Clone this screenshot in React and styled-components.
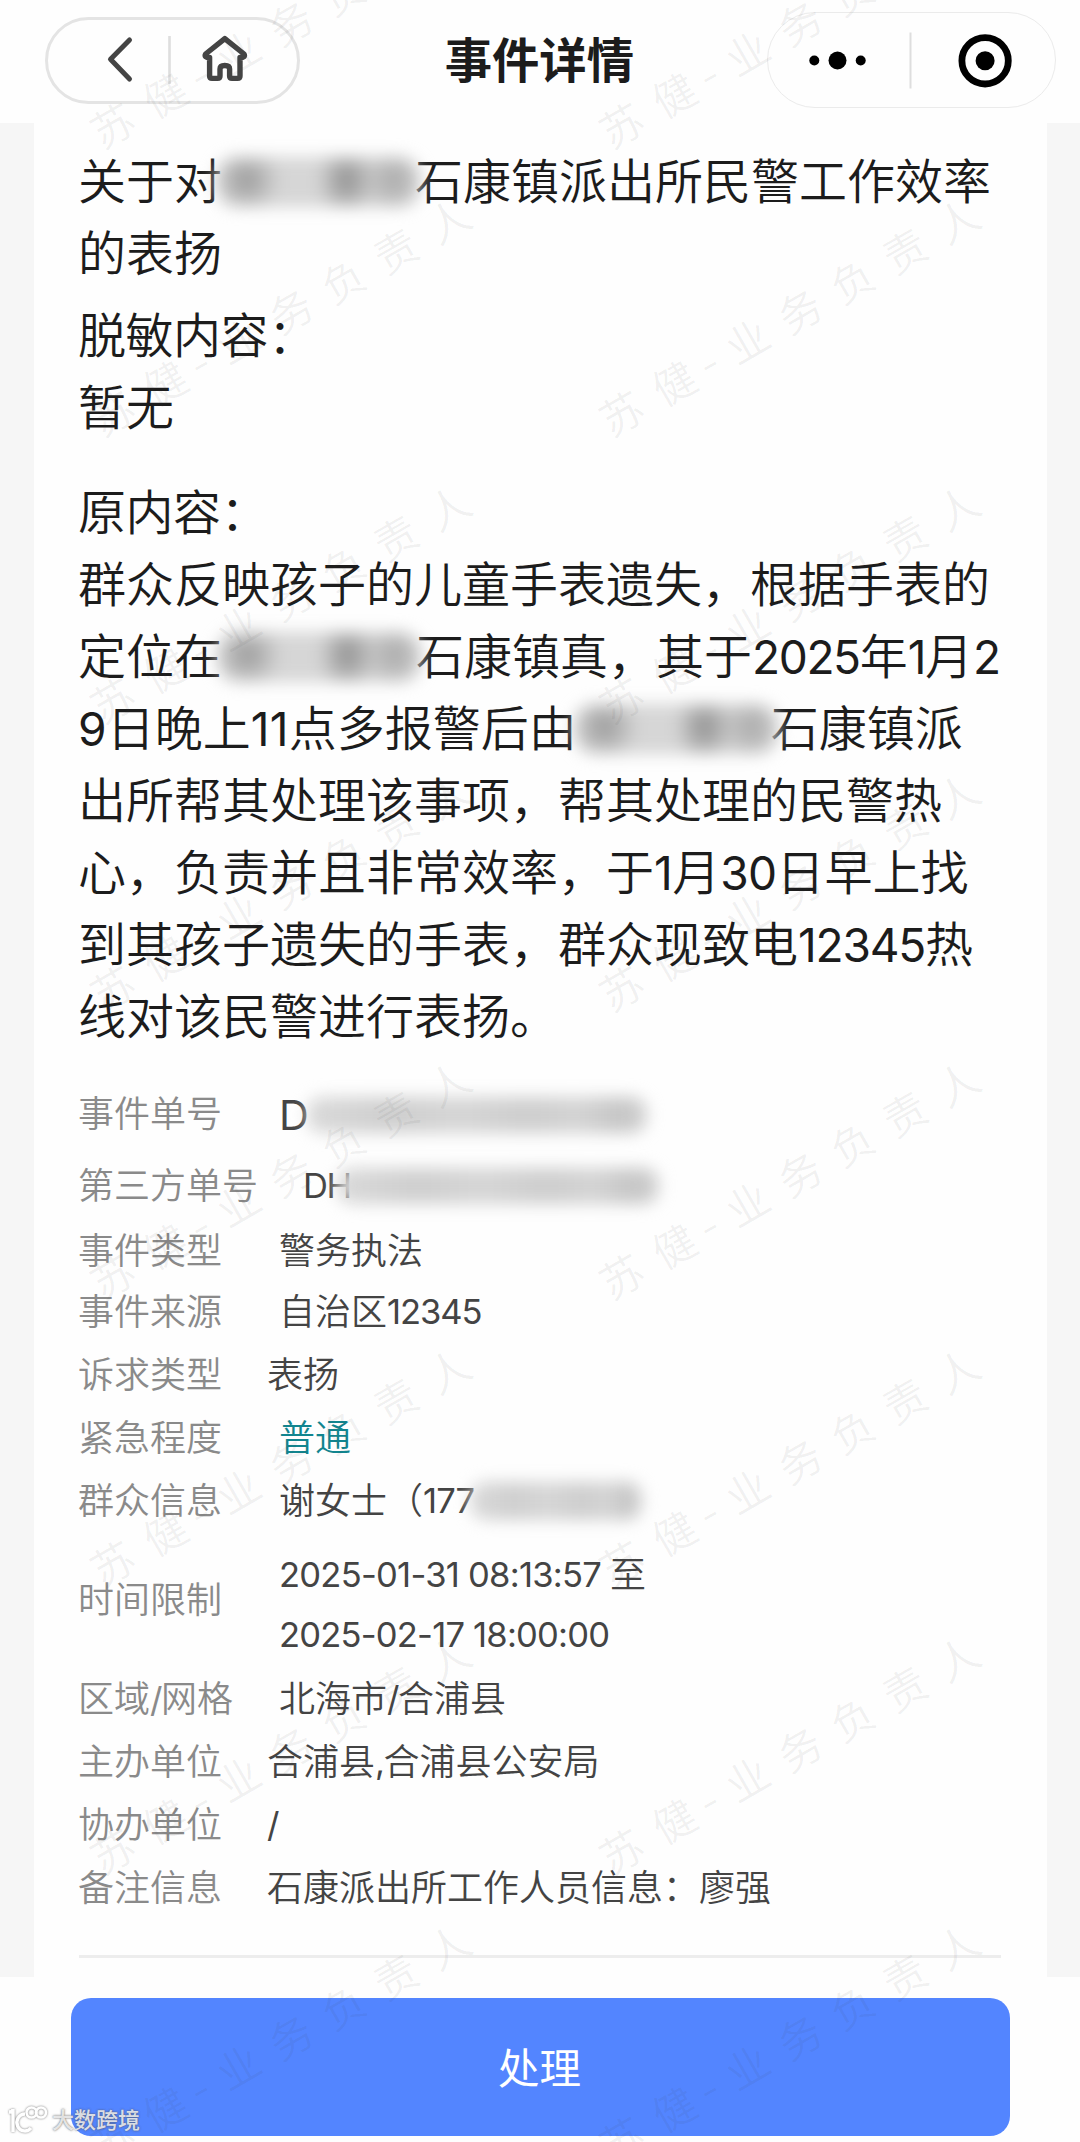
import React from "react";
import styled, { createGlobalStyle, css } from "styled-components";

const Global = createGlobalStyle`
  *, *::before, *::after { box-sizing: border-box; }
  html, body { margin: 0; padding: 0; background: #fefefe; }
  body { font-family: Inter, "Noto Sans CJK SC", sans-serif; color: #1c1c1c; }
`;

const Screen = styled.div`
  position: relative;
  width: 1080px;
  height: 2142px;
  overflow: hidden;
  background: #fefefe;
  display: flex;
  flex-direction: column;
`;

const Header = styled.header`
  height: 123px;
  flex: none;
  display: flex;
  justify-content: space-between;
  align-items: flex-start;
  padding: 12px 24px 0 45px;
`;

const Capsule = styled.div`
  display: flex;
  align-items: center;
  border-radius: 48px;
`;

const NavCapsule = styled(Capsule)`
  width: 255px;
  height: 87px;
  margin-top: 5px;
  border: 3px solid #e4e4e4;
`;

const MenuCapsule = styled(Capsule)`
  width: 289px;
  height: 96px;
  border: 1.5px solid #ebebeb;
`;

const Title = styled.h1`
  margin: 0 0 0 12.5px;
  height: 96px;
  line-height: 97px;
  font-size: 47.3px;
  font-weight: 700;
  width: 190px;
  white-space: nowrap;
`;

const Body = styled.main`
  flex: none;
  height: 1854px;
  margin: 0;
  padding: 0 33px 0 34px;
  background: #f6f6f6;
`;

const Card = styled.article`
  height: 100%;
  background: #fefefe;
  padding: 23px 46px 0 44px;
  display: flex;
  flex-direction: column;
`;

const Line = styled.p`
  margin: 0;
  height: 72px;
  line-height: 72px;
  font-size: 48px;
  font-weight: 350;
  white-space: nowrap;
  display: flex;
  letter-spacing: ${(p) => p.$ls || 0}px;
`;

const Gap = styled.div`
  flex: none;
  height: ${(p) => p.$h}px;
`;

const Latin = styled.span`
  font-family: Inter, sans-serif;
  font-size: 0.96em;
  font-weight: 370;
  letter-spacing: ${(p) => p.$ls || 0}px;
  white-space: pre;
`;

const Smudge = styled.span`
  display: block;
  flex: none;
  width: ${(p) => p.$w}px;
  height: ${(p) => p.$h}px;
  margin: 0 ${(p) => p.$mr || 0}px 0 ${(p) => p.$ml || 0}px;
  align-self: center;
  border-radius: ${(p) => p.$h / 2.4}px;
  filter: blur(8px);
  ${(p) =>
    p.$tone === "name"
      ? css`
          background:
            radial-gradient(ellipse 34px 34px at 15% 46%, #999, #99999900),
            radial-gradient(ellipse 30px 38px at 64% 46%, #8e8e8e, #8e8e8e00),
            radial-gradient(ellipse 32px 36px at 87% 46%, #a8a8a8, #a8a8a800),
            #d6d6d6;
        `
      : css`
          background: linear-gradient(90deg, #dadada, #cfcfcf 25%, #d6d6d6 45%, #cecece 65%, #d4d4d4 80%, #c6c6c6 92%, #d2d2d2);
        `}
`;

const Row = styled.div`
  flex: none;
  display: flex;
  align-items: center;
  height: ${(p) => p.$h || 63}px;
  font-size: 36px;
  font-weight: 350;
  white-space: nowrap;
`;

const Label = styled.div`
  flex: none;
  width: ${(p) => p.$w || 201}px;
  height: 60px;
  line-height: 60px;
  color: #8a8a8a;
  margin-top: ${(p) => p.$dy || 0}px;
`;

const Value = styled.div`
  display: flex;
  align-items: center;
  height: 60px;
  line-height: 60px;
  color: ${(p) => p.$color || "#444"};
  font-size: ${(p) => p.$size || 36}px;
  white-space: pre;
`;

const Stack = styled.div`
  display: flex;
  flex-direction: column;
  margin-top: 11px;
`;

const Rule = styled.hr`
  flex: none;
  width: 922px;
  height: 3px;
  margin: 36px 0 0 1px;
  border: 0;
  background: #ededed;
`;

const Footer = styled.footer`
  flex: 1;
  padding: 21px 70px 0 71px;
`;

const Action = styled.button`
  display: block;
  width: 939px;
  height: 138px;
  border: 0;
  border-radius: 20px;
  background: #5385ff;
  color: #fff;
  font: 400 41.5px/134px Inter, "Noto Sans CJK SC", sans-serif;
  padding: 4px 2px 0 0;
  text-align: center;
`;

const Marks = styled.div`
  position: absolute;
  left: 111px;
  top: 123px;
  display: grid;
  grid-template-columns: repeat(2, 509px);
  grid-auto-rows: 287.7px;
  pointer-events: none;
`;

const Mark = styled.div`
  width: 0;
  height: 0;
  display: flex;
  align-items: center;
  transform: rotate(-29.8deg);
  font-size: 42.5px;
  font-weight: 350;
  letter-spacing: 18px;
  color: rgba(60, 60, 60, 0.075);
  white-space: nowrap;
`;

const MarkText = styled.span`
  margin-left: -21px;
`;

const Dash = styled.span`
  display: inline-block;
  width: 33px;
  margin-left: -9px;
`;

const Brand = styled.div`
  position: absolute;
  left: 8px;
  top: 2105px;
  display: flex;
  align-items: flex-end;
  gap: 4px;
  color: rgba(255, 255, 255, 0.8);
  font-size: 22px;
  line-height: 29px;
  font-weight: 500;
  text-shadow: 0 0 2px rgba(90, 90, 90, 0.7), 0 0 2px rgba(90, 90, 90, 0.5);
`;

const BrandLogo = styled.svg`
  filter: drop-shadow(0 0 1px rgba(80, 80, 80, 0.75));
`;

function Mixed({ text, ls }) {
  return text
    .split(/([\x20-\x7e]+)/)
    .filter(Boolean)
    .map((part, i) =>
      /^[\x20-\x7e]/.test(part) ? (
        <Latin key={i} $ls={ls}>{part}</Latin>
      ) : (
        <span key={i}>{part}</span>
      )
    );
}

const Digits = ({ children, ls = -1.2 }) => <Mixed text={children} ls={ls} />;
const Small = ({ children, ls = -1.4 }) => <Mixed text={children} ls={ls} />;

export default function App() {
  return (
    <>
      <Global />
      <Screen>
        <Header>
          <NavCapsule>
            <svg width="249" height="81" viewBox="48 20 249 81" fill="none" stroke="#444" strokeLinecap="round" strokeLinejoin="round">
              <path d="M129.5 40 L110.5 59.3 L129.5 79" strokeWidth="5" />
              <path d="M169.5 36 V84" stroke="#dedede" strokeWidth="2.6" strokeLinecap="butt" />
              <path d="M224.8 38.6 L244 54 Q245.8 57.5 240 57.5 V76 Q240 78.4 237.6 78.4 H232 Q229.6 78.4 229.6 76 V69 Q229.6 65.5 224.8 65.5 Q220 65.5 220 69 V76 Q220 78.4 217.6 78.4 H212 Q209.6 78.4 209.6 76 V57.5 Q203.8 57.5 205.6 54 Z" strokeWidth="5.4" />
            </svg>
          </NavCapsule>
          <Title>事件详情</Title>
          <MenuCapsule>
            <svg width="286" height="93" viewBox="768.5 13.5 286 93">
              <circle cx="814.8" cy="60" r="5" />
              <circle cx="838" cy="60" r="9" />
              <circle cx="861.2" cy="60" r="5" />
              <path d="M911 32 V88" stroke="#dedede" strokeWidth="2" />
              <circle cx="985.6" cy="60.3" r="23.2" fill="none" stroke="#000" strokeWidth="6.8" />
              <circle cx="985.6" cy="60.3" r="9.5" />
            </svg>
          </MenuCapsule>
        </Header>

        <Body>
          <Card>
            <Line>
              关于对<Smudge $w={204} $h={50} $ml={-6} $mr={-5} $tone="name" />石康镇派出所民警工作效率
            </Line>
            <Line>的表扬</Line>
            <Gap $h={10} />
            <Line $ls={-0.5}>脱敏内容：</Line>
            <Line>暂无</Line>
            <Gap $h={33} />
            <Line $ls={-0.5}>原内容：</Line>
            <Line>群众反映孩子的儿童手表遗失，根据手表的</Line>
            <Line>
              定位在<Smudge $w={204} $h={50} $ml={-5} $mr={-5} $tone="name" />
              <Digits ls={-1.4}>石康镇真，其于2025年1月2</Digits>
            </Line>
            <Line>
              <Digits ls={0.2}>9日晚上11点多报警后由</Digits>
              <Smudge $w={204} $h={50} $ml={-3} $mr={-7} $tone="name" />石康镇派
            </Line>
            <Line>出所帮其处理该事项，帮其处理的民警热</Line>
            <Line><Digits ls={-0.6}>心，负责并且非常效率，于1月30日早上找</Digits></Line>
            <Line><Digits>到其孩子遗失的手表，群众现致电12345热</Digits></Line>
            <Line>线对该民警进行表扬。</Line>

            <Gap $h={26} />
            <Row $h={72}>
              <Label $dy={-3}>事件单号</Label>
              <Value $size={43}><Small>D</Small><Smudge $w={340} $h={36} /></Value>
            </Row>
            <Row $h={70}>
              <Label $w={225}>第三方单号</Label>
              <Value><Small>DH</Small><Smudge $w={322} $h={36} $ml={-14} /></Value>
            </Row>
            <Row $h={59}><Label>事件类型</Label><Value>警务执法</Value></Row>
            <Row><Label>事件来源</Label><Value><Small ls={-1.1}>自治区12345</Small></Value></Row>
            <Row><Label $w={189}>诉求类型</Label><Value>表扬</Value></Row>
            <Row><Label>紧急程度</Label><Value $color="#12858f">普通</Value></Row>
            <Row>
              <Label>群众信息</Label>
              <Value><Small ls={-0.9}>谢女士（177</Small><Smudge $w={172} $h={38} $ml={-4} /></Value>
            </Row>
            <Row $h={135}>
              <Label>时间限制</Label>
              <Stack>
                <Value><Small ls={-0.75}>2025-01-31 08:13:57 至</Small></Value>
                <Value><Small ls={-0.8}>2025-02-17 18:00:00</Small></Value>
              </Stack>
            </Row>
            <Row><Label><Small>区域/网格</Small></Label><Value><Small>北海市/合浦县</Small></Value></Row>
            <Row><Label $w={189}>主办单位</Label><Value><Small>合浦县,合浦县公安局</Small></Value></Row>
            <Row><Label $w={189}>协办单位</Label><Value><Small>/</Small></Value></Row>
            <Row><Label $w={189}>备注信息</Label><Value>石康派出所工作人员信息：廖强</Value></Row>
            <Rule />
          </Card>
        </Body>

        <Footer>
          <Action>处理</Action>
        </Footer>

        <Marks>
          {Array.from({ length: 16 }, (_, i) => (
            <Mark key={i}>
              <MarkText>苏健<Dash>-</Dash>业务负责人</MarkText>
            </Mark>
          ))}
        </Marks>

        <Brand>
          <BrandLogo width="40" height="30" viewBox="0 0 40 30" fill="none" stroke="#fff" strokeWidth="3.4">
            <path d="M1 7 Q5 7 5 4 V27" />
            <path d="M17 9 A8 8.5 0 1 0 23 23" />
            <circle cx="23.5" cy="7.5" r="5" strokeWidth="2.6" />
            <circle cx="33" cy="7.5" r="5" strokeWidth="2.6" />
          </BrandLogo>
          大数跨境
        </Brand>
      </Screen>
    </>
  );
}
